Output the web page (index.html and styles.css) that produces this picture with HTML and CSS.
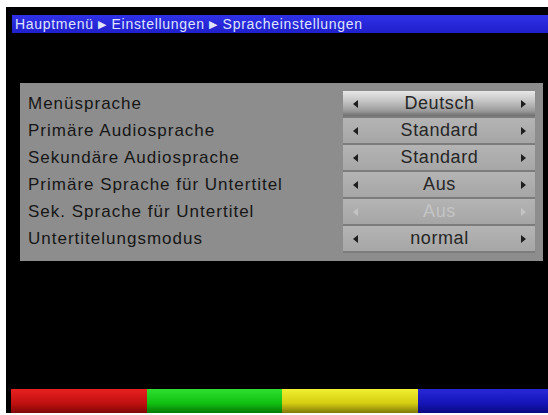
FILE: index.html
```html
<!DOCTYPE html>
<html lang="de">
<head>
  <meta charset="UTF-8" />
  <title>Spracheinstellungen</title>
  <link rel="stylesheet" href="styles.css">
</head>
<body>
  <div class="screen">
    <div class="header">Hauptmenü <span class="sep">▶</span> Einstellungen <span class="sep">▶</span> Spracheinstellungen</div>

    <div class="panel">
      <div class="labels">
        <div class="label">Menüsprache</div>
        <div class="label">Primäre Audiosprache</div>
        <div class="label">Sekundäre Audiosprache</div>
        <div class="label">Primäre Sprache für Untertitel</div>
        <div class="label">Sek. Sprache für Untertitel</div>
        <div class="label">Untertitelungsmodus</div>
      </div>
      <div class="values">
        <div class="value selected"><span class="arr left"></span><span class="txt">Deutsch</span><span class="arr right"></span></div>
        <div class="value"><span class="arr left"></span><span class="txt">Standard</span><span class="arr right"></span></div>
        <div class="value"><span class="arr left"></span><span class="txt">Standard</span><span class="arr right"></span></div>
        <div class="value"><span class="arr left"></span><span class="txt">Aus</span><span class="arr right"></span></div>
        <div class="value disabled"><span class="arr left"></span><span class="txt">Aus</span><span class="arr right"></span></div>
        <div class="value"><span class="arr left"></span><span class="txt">normal</span><span class="arr right"></span></div>
      </div>
    </div>

    <div class="keys">
      <div class="key red"></div>
      <div class="key green"></div>
      <div class="key yellow"></div>
      <div class="key blue"></div>
    </div>
  </div>
</body>
</html>
```

FILE: styles.css
```css
* {
  box-sizing: border-box;
  margin: 0;
  padding: 0;
}
body {
  background: #fff;
  font-family: 'Liberation Sans', Arial, sans-serif;
  width: 548px;
  height: 415px;
  overflow: hidden;
}
.screen {
  margin: 7px 0 0 6px;
  width: 542px;
  height: 406px;
  background: #000;
  padding-top: 8px;
  display: flex;
  flex-direction: column;
}
.header {
  margin-left: 6px;
  height: 18px;
  line-height: 18px;
  padding-left: 3px;
  background: linear-gradient(#3030e8, #2020cc);
  color: #dfe4ff;
  font-size: 14px;
  letter-spacing: 0.7px;
  white-space: nowrap;
}
.header .sep {
  font-size: 11px;
  position: relative;
  top: -1px;
}
.panel {
  margin: 50px 5px 0 14px;
  background: #8d8d8d;
  padding: 8px 8px 8px 0;
  display: flex;
  justify-content: space-between;
}
.labels {
  padding-left: 8px;
}
.label {
  height: 27px;
  line-height: 25px;
  font-size: 17px;
  color: #161616;
  letter-spacing: 1px;
  white-space: nowrap;
}
.values {
  width: 192px;
  display: flex;
  flex-direction: column;
  gap: 2px;
  background: #7c7c7c;
}
.value {
  height: 25px;
  background: linear-gradient(#b4b4b4, #a6a6a6);
  display: flex;
  align-items: center;
  padding: 0 9px 0 10px;
  font-size: 18px;
  letter-spacing: 0.6px;
  color: #262626;
}
.value.selected {
  background: linear-gradient(#e8e8e8 0%, #c0c0c0 45%, #9a9a9a 80%, #6e6e6e 100%);
}
.value.disabled {
  color: #c4c4c4;
}
.txt {
  flex: 1;
  text-align: center;
}
.arr {
  width: 0;
  height: 0;
  border-top: 4px solid transparent;
  border-bottom: 4px solid transparent;
}
.arr.left {
  border-right: 5px solid #1e1e1e;
}
.arr.right {
  border-left: 5px solid #1e1e1e;
}
.disabled .arr.left {
  border-right-color: #c4c4c4;
}
.disabled .arr.right {
  border-left-color: #c4c4c4;
}
.keys {
  margin: auto 0 0 5px;
  height: 24px;
  display: flex;
}
.key {
  flex: 136;
}
.key.blue {
  flex: 131;
}
.red {
  background: linear-gradient(#e82020, #c01010 60%, #800808);
}
.green {
  background: linear-gradient(#30e030, #10c010 60%, #087808);
}
.yellow {
  background: linear-gradient(#f0f030, #d4cc10 60%, #807808);
}
.blue {
  background: linear-gradient(#2828d8, #1414b8 60%, #0a0a80);
}
```
